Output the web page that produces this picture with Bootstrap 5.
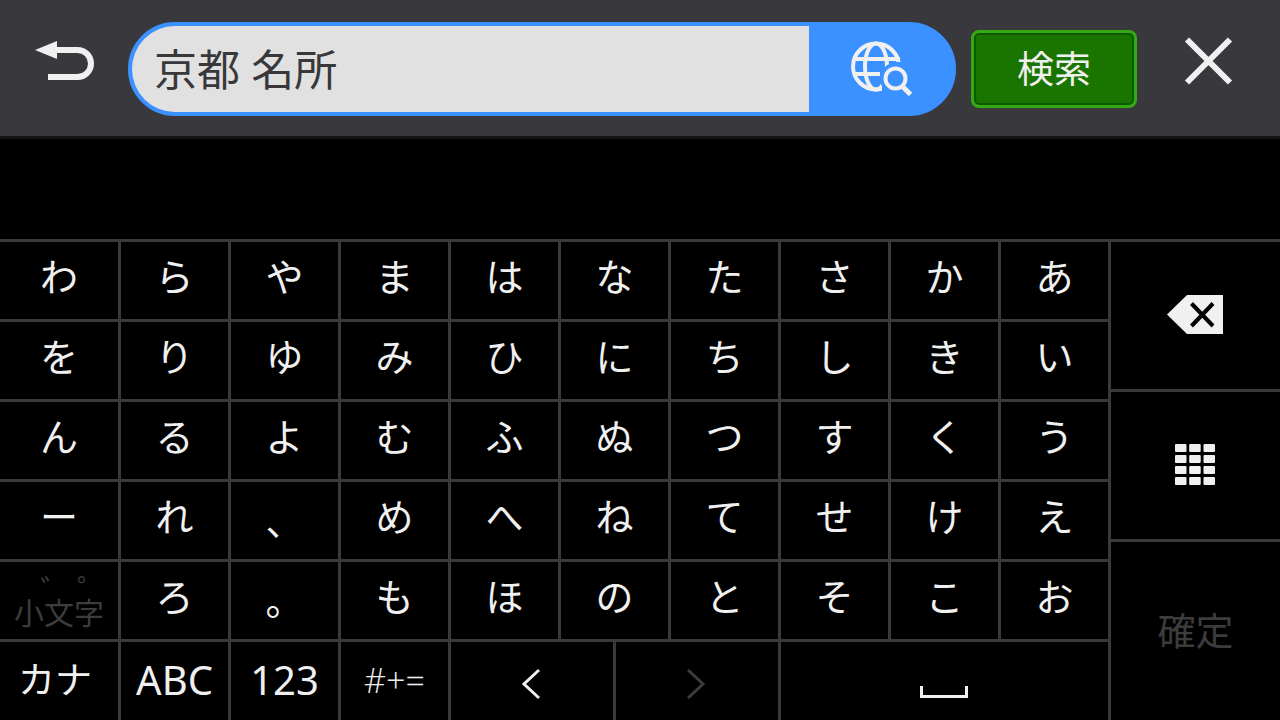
<!DOCTYPE html>
<html lang="ja">
<head>
<meta charset="utf-8">
<meta name="viewport" content="width=device-width, initial-scale=1">
<title>検索キーボード</title>
<link href="https://cdn.jsdelivr.net/npm/bootstrap@5.3.0/dist/css/bootstrap.min.css" rel="stylesheet">
<style>
  :root { --panel: #39383d; --line: #3a3a3d; --ink: #f0f0f0; --dim: #3c3c3c; --accent: #3a91ff; }
  body { background: #000; color: var(--ink); font-family: "Noto Sans CJK JP", sans-serif; }
  svg { display: block; }

  .topbar { background: var(--panel); border-bottom: 3px solid #151517; padding: 22px 0 20px; }
  .icon-btn { border: 0; background: none; color: inherit; padding: 0 0 16px; }
  .back-btn { padding-left: 35px; padding-right: 34px; }
  .close-btn { padding-left: 47px; padding-right: 47px; }
  .search-pill { background: var(--accent); border: 4px solid var(--accent); border-radius: 47px; height: 94px; }
  .search-pill .form-control { background: #e1e1e1; color: #38383a; border: 0; border-radius: 43px 0 0 43px; padding: 2px 22px 0; font-family: "Noto Sans", "Noto Sans CJK JP", sans-serif; font-size: 43px; line-height: 64px; min-width: 0; }
  .search-pill .web-btn { border: 0; background: none; color: var(--ink); padding: 0 39px 2px 42px; }
  .go-btn { height: 78px; width: 166px; margin-left: 15px; padding: 0 0 4px; background: #1a7500; border: 3px solid #33a914; border-radius: 8px; box-shadow: inset 0 0 0 2px #0c5900; color: var(--ink); font-size: 37px; line-height: 56px; }
  .suggestions { height: 100px; }

  .keyboard { display: grid; grid-template-columns: 1108fr 169fr; gap: 3px; background: var(--line); border-top: 3px solid var(--line); }
  .keys, .side, .keys-last { display: grid; gap: 3px; }
  .keys { grid-template: repeat(5, 77fr) 78fr / 118fr repeat(9, 107fr); }
  .keys-last { grid-column: 1 / -1; grid-template-columns: 118fr repeat(3, 107fr) 162fr 162fr 327fr; }
  .side { grid-template-rows: 147fr 147fr 178fr; }
  .key { display: flex; align-items: center; justify-content: center; min-width: 0; border: 0; background: #000; color: var(--ink); padding: 0 0 12px; font-size: 38px; line-height: 48px; }
  .key:disabled { color: var(--dim); }
  .key-punct, .key-enter { padding: 0 0 4px; }
  .key-kana { font-size: 37px; padding: 0 8px 6px 0; }
  .key-latin { font-family: "Noto Sans", sans-serif; font-size: 40px; padding: 0 0 2px; }
  .key-symbol { font-family: "Open Sans", sans-serif; font-size: 34px; font-weight: 300; padding: 0 0 2px; }
  .key-small { font-size: 30px; line-height: 23px; padding: 0 0 2px; }
  .key-arrow { padding: 6px 2px 0 0; }
  .key-space { padding: 22px 1px 0 0; }
  .key-icon { padding: 0 2px 2px 0; }
</style>
</head>
<body>
<div class="d-flex flex-column min-vh-100">
  <header class="topbar">
    <form class="d-flex align-items-center">
      <button type="button" class="icon-btn back-btn" aria-label="戻る">
        <svg width="59" height="40" viewBox="35 41 59 40" fill="none"><path d="M35 50 57 41V59Z" fill="currentColor"/><path d="M56 50H77.500A13.500 13.500 0 0 1 77.500 77H48" stroke="currentColor" stroke-width="6"/></svg>
      </button>
      <div class="search-pill d-flex flex-fill">
        <input class="form-control flex-fill shadow-none" type="text" value="京都 名所" aria-label="検索語">
        <button type="button" class="web-btn" aria-label="ウェブ検索">
          <svg width="62" height="58" viewBox="851 39 62 58" fill="none" stroke="currentColor" stroke-width="4">
            <circle cx="876" cy="66.500" r="23"/>
            <ellipse cx="876" cy="66.500" rx="11" ry="23"/>
            <path d="M854 59H900M854 74H880"/>
            <path d="M890 62H904V96H882V84Z" fill="#3a91ff" stroke="none"/>
            <circle cx="896" cy="78.500" r="16" fill="#3a91ff" stroke="none"/>
            <circle cx="895.500" cy="78.500" r="10"/>
            <path d="M902 86 910.500 94.500" stroke-width="5"/>
          </svg>
        </button>
      </div>
      <button type="submit" class="go-btn">検索</button>
      <button type="button" class="icon-btn close-btn" aria-label="閉じる">
        <svg width="49" height="48" viewBox="0 0 49 48" stroke="currentColor" stroke-width="6"><path d="M3 2.500 46 45.500M46 2.500 3 45.500"/></svg>
      </button>
    </form>
  </header>
  <div class="suggestions"></div>
  <main class="keyboard flex-fill">
    <div class="keys">
      <button class="key">わ</button><button class="key">ら</button><button class="key">や</button><button class="key">ま</button><button class="key">は</button><button class="key">な</button><button class="key">た</button><button class="key">さ</button><button class="key">か</button><button class="key">あ</button>
      <button class="key">を</button><button class="key">り</button><button class="key">ゆ</button><button class="key">み</button><button class="key">ひ</button><button class="key">に</button><button class="key">ち</button><button class="key">し</button><button class="key">き</button><button class="key">い</button>
      <button class="key">ん</button><button class="key">る</button><button class="key">よ</button><button class="key">む</button><button class="key">ふ</button><button class="key">ぬ</button><button class="key">つ</button><button class="key">す</button><button class="key">く</button><button class="key">う</button>
      <button class="key">ー</button><button class="key">れ</button><button class="key key-punct">、</button><button class="key">め</button><button class="key">へ</button><button class="key">ね</button><button class="key">て</button><button class="key">せ</button><button class="key">け</button><button class="key">え</button>
      <button class="key key-small" disabled><span>　゛&nbsp;゜<br>小文字</span></button><button class="key">ろ</button><button class="key key-punct">。</button><button class="key">も</button><button class="key">ほ</button><button class="key">の</button><button class="key">と</button><button class="key">そ</button><button class="key">こ</button><button class="key">お</button>
      <div class="keys-last">
        <button class="key key-kana">カナ</button>
        <button class="key key-latin">ABC</button>
        <button class="key key-latin">123</button>
        <button class="key key-symbol">#+=</button>
        <button class="key key-arrow" aria-label="左へ"><svg width="20" height="32" viewBox="0 0 20 32" fill="none" stroke="currentColor" stroke-width="3"><path d="M18 2 3 16 18 30"/></svg></button>
        <button class="key key-arrow" aria-label="右へ" disabled><svg width="20" height="32" viewBox="0 0 20 32" fill="none" stroke="currentColor" stroke-width="3"><path d="M2 2 17 16 2 30"/></svg></button>
        <button class="key key-space" aria-label="スペース"><svg width="48" height="12" viewBox="0 0 48 12" fill="none" stroke="currentColor" stroke-width="3"><path d="M1.500 0V10.500H46.500V0"/></svg></button>
      </div>
    </div>
    <div class="side">
      <button class="key key-icon" aria-label="削除"><svg width="56" height="39" viewBox="0 0 56 39"><path d="M0 19.500 20 0H56V39H20Z" fill="currentColor"/><path d="M24.500 8.500 46 31M46 8.500 24.500 31" stroke="#000" stroke-width="4"/></svg></button>
      <button class="key key-icon" aria-label="テンキー"><svg width="40" height="41" viewBox="0 0 40 41" fill="currentColor"><g id="r"><rect width="11.500" height="8" rx="1"/><rect x="14.200" width="11.500" height="8" rx="1"/><rect x="28.500" width="11.500" height="8" rx="1"/></g><use href="#r" y="11"/><use href="#r" y="22"/><use href="#r" y="33"/></svg></button>
      <button class="key key-enter" disabled>確定</button>
    </div>
  </main>
</div>
<script src="https://cdn.jsdelivr.net/npm/bootstrap@5.3.0/dist/js/bootstrap.bundle.min.js"></script>
</body>
</html>
